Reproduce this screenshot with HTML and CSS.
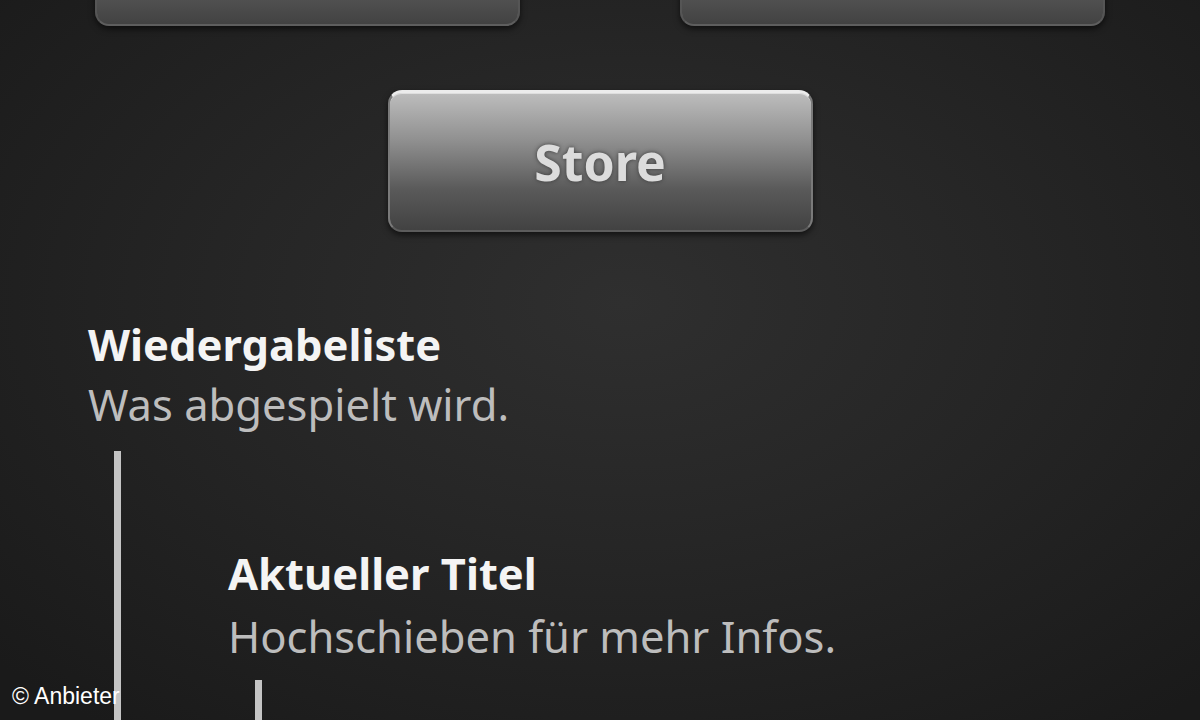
FILE: index.html
```html
<!doctype html>
<html lang="de">
    <head>
        <meta charset="UTF-8" />
        <meta name="viewport" content="width=device-width, initial-scale=1.0" />
        <title>Musik</title>
        <link rel="stylesheet" href="styles.css">
    </head>
    <body>
        <div class="screen">
            <div class="top-row">
                <div class="btn btn-top"></div>
                <div class="btn btn-top"></div>
            </div>

            <div class="store-row">
                <button class="btn btn-store">Store</button>
            </div>

            <div class="node node-root">
                <div class="node-title">Wiedergabeliste</div>
                <div class="node-sub">Was abgespielt wird.</div>
                <div class="node-children">
                    <div class="node">
                        <div class="node-title">Aktueller Titel</div>
                        <div class="node-sub node-sub-2">Hochschieben für mehr Infos.</div>
                        <div class="node-children node-children-2"></div>
                    </div>
                </div>
            </div>

            <div class="credit">© Anbieter</div>
        </div>
    </body>
</html>
```

FILE: styles.css
```css
html,
body {
    margin: 0;
    height: 100%;
    overflow: hidden;
}
body {
    background: #1c1c1c;
    font-family: "Noto Sans", "Open Sans", sans-serif;
}
.screen {
    position: relative;
    height: 720px;
    overflow: hidden;
    background: radial-gradient(ellipse 70% 75% at 52% 42%, #2f2f2f 0%, #262626 45%, #1a1a1a 100%);
}
.top-row {
    display: flex;
    justify-content: space-between;
    padding: 0 95px;
}
.btn {
    box-sizing: border-box;
    width: 425px;
    height: 142px;
    border-radius: 14px;
    border: 2px solid #7a7a7a;
    border-top: 3px solid #ececec;
    border-bottom-color: #5c5c5c;
    background: linear-gradient(to bottom, #bdbdbd 0%, #8f8f8f 35%, #5a5a5a 70%, #424242 100%);
    box-shadow: 0 3px 6px rgba(0, 0, 0, 0.6), inset 0 1px 0 rgba(255, 255, 255, 0.5);
}
.btn-top {
    margin-top: -116px;
    border-color: #555;
    border-bottom-color: #5e5e5e;
}
.store-row {
    display: flex;
    justify-content: center;
    margin-top: 64px;
}
.btn-store {
    display: block;
    font-family: inherit;
    font-size: 50px;
    font-weight: bold;
    color: #dcdcdc;
    text-shadow: 0 0 4px #3a3a3a;
    padding: 0;
    cursor: pointer;
}
.node-root {
    margin-top: 82px;
    padding-left: 88px;
}
.node-title {
    font-size: 43.5px;
    font-weight: bold;
    color: #f4f4f4;
    line-height: 60px;
}
.node-sub {
    font-size: 43.5px;
    color: #bdbdbd;
    line-height: 60px;
}
.node-sub-2 {
    margin-top: 3px;
}
.node-children {
    margin: 17px 0 0 26px;
    border-left: 7px solid #c4c4c4;
    padding: 92px 0 0 107px;
    height: 400px;
}
.node-children-2 {
    margin: 14px 0 0 27px;
    height: 200px;
    padding: 0;
}
.credit {
    position: absolute;
    left: 12px;
    bottom: 10px;
    font-family: "Liberation Sans", Arial, sans-serif;
    font-size: 23px;
    color: #fff;
}
```
